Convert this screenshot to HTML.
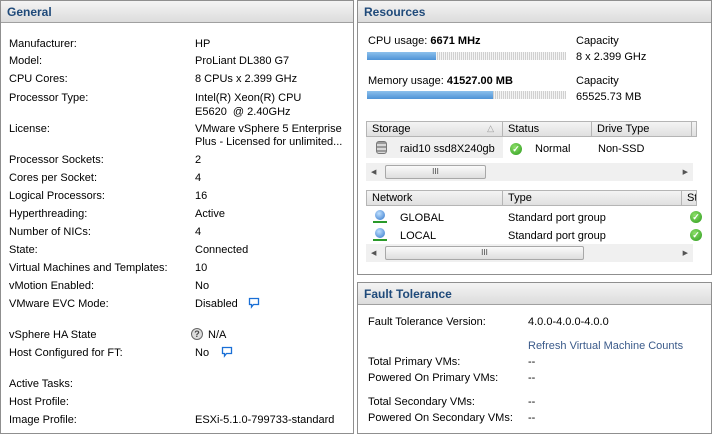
<!DOCTYPE html>
<html><head><meta charset="utf-8"><style>
*{margin:0;padding:0;box-sizing:border-box}
body{width:713px;height:432px;background:#fff;font-family:"Liberation Sans",sans-serif;font-size:11px;color:#000;position:relative;overflow:hidden}
.p{position:absolute;border:1px solid #8f8f8f;background:#fff}
.h{position:absolute;left:0;right:0;top:0;height:22px;background:linear-gradient(#f4f4f4,#dcdcdc);border-bottom:1px solid #a0a0a0;color:#1f4a7a;font-weight:bold;font-size:12px;padding:4px 0 0 6px}
.t{position:absolute;white-space:nowrap;line-height:13px;margin-top:1px}
.bar{position:absolute;height:8px;background:repeating-linear-gradient(90deg,#d0d0d0 0 1px,#f4f4f4 1px 2px)}
.bar i{position:absolute;left:0;top:0;bottom:0;background:linear-gradient(#8cc0ec,#4e93d6)}
.th{position:absolute;height:16px;background:linear-gradient(#f4f4f4,#e0e0e0);border:1px solid #b5b5b5;padding:1px 0 0 5px;line-height:13px}
.sb{position:absolute;height:18px;background:#f0f0f0}
.sb .th2{position:absolute;top:2px;height:14px;border:1px solid #a8a8a8;border-radius:2px;background:linear-gradient(#fafafa,#dedede);text-align:center;font-size:8px;line-height:12px;color:#444}
.ok{position:absolute;width:12px;height:12px;border-radius:50%;background:radial-gradient(circle at 40% 35%,#8ee06a,#2b9a1c);color:#fff;font-size:9px;line-height:12px;text-align:center;font-weight:bold}
.gl{position:absolute;width:14px;height:14px}
.gl b{position:absolute;left:3px;top:0;width:10px;height:10px;border-radius:50%;background:radial-gradient(circle at 40% 35%,#bfe0ff,#2f74c9)}
.gl u{position:absolute;left:1px;top:11px;width:14px;height:2px;background:#2a9a2a}
.arr{position:absolute;top:5px;font-size:7px;color:#555}
</style></head><body>

<div class="p" style="left:0;top:0;width:354px;height:434px">
<div class="h">General</div>
</div>
<div class="t" style="left:9px;top:37px">Manufacturer:</div><div class="t" style="left:195px;top:37px">HP</div>
<div class="t" style="left:9px;top:54px">Model:</div><div class="t" style="left:195px;top:54px">ProLiant DL380 G7</div>
<div class="t" style="left:9px;top:72px">CPU Cores:</div><div class="t" style="left:195px;top:72px">8 CPUs x 2.399 GHz</div>
<div class="t" style="left:9px;top:91px">Processor Type:</div><div class="t" style="left:195px;top:91px">Intel(R) Xeon(R) CPU</div><div class="t" style="left:195px;top:105px">E5620&nbsp; @ 2.40GHz</div>
<div class="t" style="left:9px;top:122px">License:</div><div class="t" style="left:195px;top:122px">VMware vSphere 5 Enterprise</div><div class="t" style="left:195px;top:135px">Plus - Licensed for unlimited...</div>
<div class="t" style="left:9px;top:153px">Processor Sockets:</div><div class="t" style="left:195px;top:153px">2</div>
<div class="t" style="left:9px;top:171px">Cores per Socket:</div><div class="t" style="left:195px;top:171px">4</div>
<div class="t" style="left:9px;top:189px">Logical Processors:</div><div class="t" style="left:195px;top:189px">16</div>
<div class="t" style="left:9px;top:207px">Hyperthreading:</div><div class="t" style="left:195px;top:207px">Active</div>
<div class="t" style="left:9px;top:225px">Number of NICs:</div><div class="t" style="left:195px;top:225px">4</div>
<div class="t" style="left:9px;top:243px">State:</div><div class="t" style="left:195px;top:243px">Connected</div>
<div class="t" style="left:9px;top:261px">Virtual Machines and Templates:</div><div class="t" style="left:195px;top:261px">10</div>
<div class="t" style="left:9px;top:279px">vMotion Enabled:</div><div class="t" style="left:195px;top:279px">No</div>
<div class="t" style="left:9px;top:297px">VMware EVC Mode:</div><div class="t" style="left:195px;top:297px">Disabled</div>
<svg style="position:absolute;left:248px;top:297px" width="12" height="12"><path d="M1.5 1.5h9v6h-5l-2 2.5v-2.5h-2z" fill="none" stroke="#1a6fd6" stroke-width="1.3"/></svg>
<div class="t" style="left:9px;top:328px">vSphere HA State</div>
<div style="position:absolute;left:191px;top:328px;width:12px;height:12px;border-radius:50%;border:1px solid #666;background:#ddd;font-size:9px;line-height:10px;text-align:center;font-weight:bold;color:#444">?</div>
<div class="t" style="left:208px;top:328px">N/A</div>
<div class="t" style="left:9px;top:346px">Host Configured for FT:</div><div class="t" style="left:195px;top:346px">No</div>
<svg style="position:absolute;left:221px;top:346px" width="12" height="12"><path d="M1.5 1.5h9v6h-5l-2 2.5v-2.5h-2z" fill="none" stroke="#1a6fd6" stroke-width="1.3"/></svg>
<div class="t" style="left:9px;top:377px">Active Tasks:</div>
<div class="t" style="left:9px;top:395px">Host Profile:</div>
<div class="t" style="left:9px;top:413px">Image Profile:</div><div class="t" style="left:195px;top:413px">ESXi-5.1.0-799733-standard</div>

<div class="p" style="left:357px;top:0;width:355px;height:275px">
<div class="h">Resources</div>
</div>
<div class="t" style="left:368px;top:34px">CPU usage: <b>6671 MHz</b></div>
<div class="bar" style="left:367px;top:52px;width:199px"><i style="width:69px"></i></div>
<div class="t" style="left:576px;top:34px">Capacity</div><div class="t" style="left:576px;top:50px">8 x 2.399 GHz</div>
<div class="t" style="left:368px;top:74px">Memory usage: <b>41527.00 MB</b></div>
<div class="bar" style="left:367px;top:91px;width:199px"><i style="width:126px"></i></div>
<div class="t" style="left:576px;top:74px">Capacity</div><div class="t" style="left:576px;top:90px">65525.73 MB</div>

<div class="th" style="left:366px;top:121px;width:137px">Storage<span style="position:absolute;right:8px;top:0;color:#999;font-size:9px">△</span></div>
<div class="th" style="left:502px;top:121px;width:90px">Status</div>
<div class="th" style="left:591px;top:121px;width:101px">Drive Type</div>
<div class="th" style="left:691px;top:121px;width:6px;padding:0"></div>
<div style="position:absolute;left:366px;top:137px;width:137px;height:21px;background:#f0f0f0"></div>
<div style="position:absolute;left:376px;top:141px;width:11px;height:13px;border-radius:3px;background:repeating-linear-gradient(#9a9a9a 0 2px,#d8d8d8 2px 4px);border:1px solid #777"></div>
<div class="t" style="left:400px;top:142px">raid10 ssd8X240gb</div>
<div class="ok" style="left:510px;top:143px">✓</div>
<div class="t" style="left:535px;top:142px">Normal</div>
<div class="t" style="left:598px;top:142px">Non-SSD</div>
<div class="sb" style="left:366px;top:163px;width:327px"><span class="arr" style="left:5px">◀</span><div class="th2" style="left:19px;width:101px">III</div><span class="arr" style="right:5px">▶</span></div>

<div class="th" style="left:366px;top:190px;width:137px">Network</div>
<div class="th" style="left:502px;top:190px;width:180px">Type</div>
<div class="th" style="left:681px;top:190px;width:16px;overflow:hidden">Sta</div>
<div class="gl" style="left:372px;top:210px"><b></b><u></u></div>
<div class="t" style="left:400px;top:211px">GLOBAL</div><div class="t" style="left:508px;top:211px">Standard port group</div>
<div class="ok" style="left:690px;top:211px">✓</div>
<div class="gl" style="left:372px;top:228px"><b></b><u></u></div>
<div class="t" style="left:400px;top:229px">LOCAL</div><div class="t" style="left:508px;top:229px">Standard port group</div>
<div class="ok" style="left:690px;top:229px">✓</div>
<div class="sb" style="left:366px;top:244px;width:327px"><span class="arr" style="left:5px">◀</span><div class="th2" style="left:19px;width:199px">III</div><span class="arr" style="right:5px">▶</span></div>

<div class="p" style="left:357px;top:282px;width:355px;height:152px">
<div class="h">Fault Tolerance</div>
</div>
<div class="t" style="left:368px;top:315px">Fault Tolerance Version:</div><div class="t" style="left:528px;top:315px">4.0.0-4.0.0-4.0.0</div>
<div class="t" style="left:528px;top:339px;color:#3a5a8a">Refresh Virtual Machine Counts</div>
<div class="t" style="left:368px;top:355px">Total Primary VMs:</div><div class="t" style="left:528px;top:355px">--</div>
<div class="t" style="left:368px;top:371px">Powered On Primary VMs:</div><div class="t" style="left:528px;top:371px">--</div>
<div class="t" style="left:368px;top:395px">Total Secondary VMs:</div><div class="t" style="left:528px;top:395px">--</div>
<div class="t" style="left:368px;top:411px">Powered On Secondary VMs:</div><div class="t" style="left:528px;top:411px">--</div>
</body></html>
